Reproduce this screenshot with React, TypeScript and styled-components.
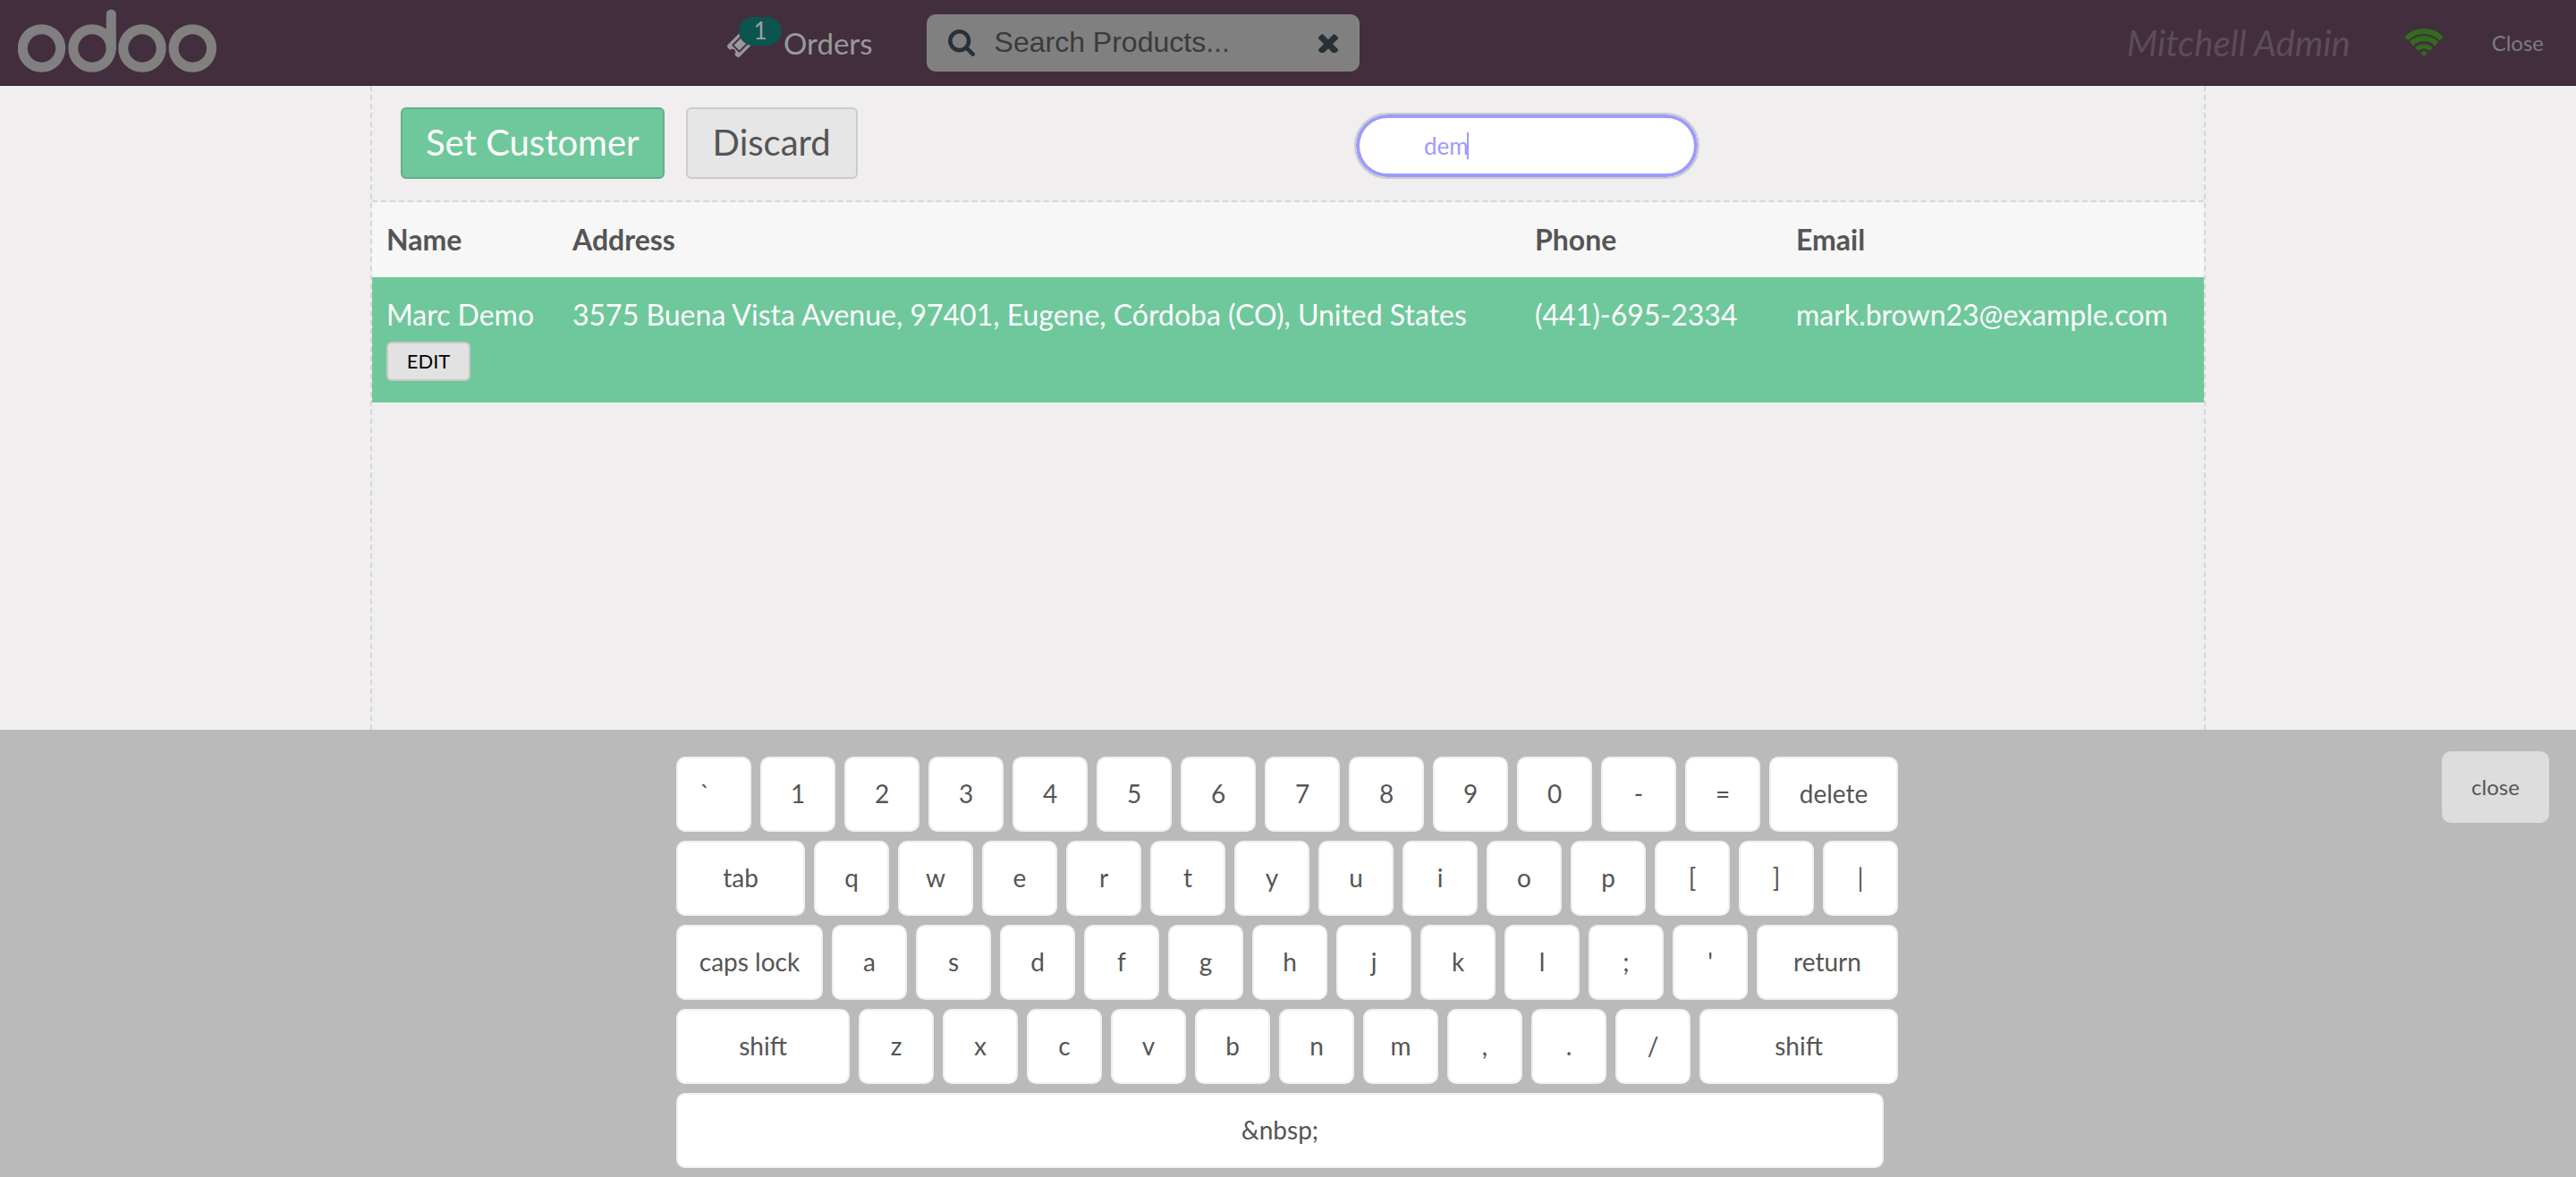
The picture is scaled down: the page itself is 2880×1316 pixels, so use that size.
import React, { useState } from "react";
import styled, { createGlobalStyle } from "styled-components";

const GlobalStyle = createGlobalStyle`
  *, *::before, *::after { box-sizing: border-box; }
  body {
    margin: 0;
    background: #f0eeee;
    color: #555;
    font-family: Lato, "Open Sans", sans-serif;
  }
  button, input { font-family: inherit; margin: 0; }
`;

const Page = styled.div`
  display: flex;
  flex-direction: column;
  min-height: 100vh;
`;

const TopBar = styled.header`
  display: flex;
  align-items: center;
  height: 96px;
  flex: none;
  background: #432e3e;
  border-bottom: 1px solid #38252f;
`;

const Branding = styled.div`
  flex: 0 0 812px;
  padding-left: 20px;
  svg { display: block; }
`;

const OrdersButton = styled.button`
  position: relative;
  display: flex;
  align-items: center;
  gap: 30px;
  padding: 0;
  border: 0;
  background: none;
  color: #999;
  font-size: 33px;
  line-height: 48px;
`;

const Badge = styled.span`
  position: absolute;
  left: 14px;
  top: -5px;
  width: 48px;
  height: 32px;
  border-radius: 16px;
  background: #0b5450;
  color: #a0a0a0;
  font-size: 26px;
  line-height: 30px;
  text-align: center;
`;

const ProductSearch = styled.label`
  display: flex;
  align-items: center;
  gap: 22px;
  width: 484px;
  height: 64px;
  margin-left: 60px;
  padding: 0 24px;
  border-radius: 10px;
  background: #808080;
  color: #263238;
`;

const ProductInput = styled.input`
  flex: 1;
  min-width: 0;
  padding: 0;
  border: 0;
  outline: 0;
  background: none;
  font-family: "Liberation Sans", Arial, sans-serif;
  font-size: 32px;
  color: #3a3a3a;
  &::placeholder { color: #3a3a3a; opacity: 1; }
`;

const IconButton = styled.button`
  display: flex;
  padding: 0;
  border: 0;
  background: none;
  color: inherit;
`;

const StatusArea = styled.div`
  display: flex;
  align-items: center;
  margin-left: auto;
  padding-right: 36px;
`;

const Cashier = styled.span`
  color: #5d4c59;
  font-size: 40px;
  font-style: italic;
`;

const Wifi = styled.span`
  display: flex;
  margin: 0 54px 0 60px;
  color: #326b1f;
`;

const CloseSession = styled.button`
  padding: 0;
  border: 0;
  background: none;
  color: #7d7d7d;
  font-size: 24px;
`;

const ClientScreen = styled.main`
  flex: 1;
  width: 100%;
  max-width: 2052px;
  margin: 0 auto;
  border: 2px dashed #d6d6d6;
  border-width: 0 2px;
`;

const Toolbar = styled.section`
  display: flex;
  align-items: flex-start;
  height: 130px;
  padding: 24px 32px 0;
  border-bottom: 2px dashed #d6d6d6;
`;

const ActionButton = styled.button<{ $primary?: boolean }>`
  min-width: 192px;
  height: 80px;
  margin-right: 24px;
  padding: 0 26px 2px;
  border: 2px solid ${(p) => (p.$primary ? "#64af8a" : "#cecbcb")};
  border-radius: 6px;
  background: ${(p) => (p.$primary ? "#6ec89b" : "#e6e6e6")};
  color: ${(p) => (p.$primary ? "#fff" : "#555")};
  font-size: 40px;
`;

const CustomerSearch = styled.div`
  position: relative;
  width: 386px;
  margin: 6px 532px 0 auto;
`;

const CustomerInput = styled.input`
  display: block;
  width: 100%;
  height: 74px;
  padding: 0 40px 0 76px;
  border: 2px solid #cecbcb;
  border-radius: 37px;
  outline: 0;
  box-shadow: inset 0 0 0 4px #9b9bff;
  background: #fff;
  color: #9b9bff;
  caret-color: transparent;
  font-size: 26px;
`;

const Caret = styled.span`
  position: absolute;
  left: 126px;
  top: 22px;
  width: 2px;
  height: 30px;
  background: #9b9bff;
`;

const ClientTable = styled.table`
  width: 100%;
  border-collapse: collapse;
  table-layout: fixed;
  font-size: 32px;
  line-height: 40px;
  text-align: left;
`;

const HeadCell = styled.th<{ $width: string }>`
  width: ${(p) => p.$width};
  height: 84px;
  padding: 0 16px;
  background: #f7f7f7;
  font-weight: 700;
`;

const Cell = styled.td`
  height: 140px;
  padding: 22px 16px 0;
  background: #6ec89b;
  color: #fff;
  vertical-align: top;
  white-space: nowrap;
`;

const EditButton = styled.button`
  display: block;
  width: 94px;
  height: 44px;
  margin-top: 10px;
  padding: 0 0 2px;
  border: 2px solid #c8c8c8;
  border-radius: 6px;
  background: #e2e2e2;
  color: #000;
  font-size: 22px;
  text-transform: uppercase;
`;

const Keyboard = styled.section`
  position: relative;
  flex: none;
  display: flex;
  justify-content: center;
  padding: 30px 0 10px;
  background: #bababa;
`;

const KeyRows = styled.div`
  display: flex;
  flex-direction: column;
  gap: 10px;
  width: 1368px;
  padding-right: 2px;
`;

const KeyRow = styled.div`
  display: flex;
  gap: 10px;
`;

const Key = styled.button<{ $width: number; $shifted?: boolean }>`
  flex: none;
  width: ${(p) => p.$width}px;
  height: 84px;
  padding: 0 ${(p) => (p.$shifted ? 20 : 0)}px 2px 0;
  border: 2px solid #f0f0f0;
  border-radius: 10px;
  background: #fff;
  color: #555;
  font-size: 28px;
`;

const CloseKeyboard = styled.button`
  position: absolute;
  top: 24px;
  right: 30px;
  width: 120px;
  height: 80px;
  padding: 0 0 2px;
  border: 0;
  border-radius: 10px;
  background: #ddd;
  color: #555;
  font-size: 24px;
`;

const Logo = () => (
  <svg width="224" height="76" viewBox="0 0 224 76" fill="none" stroke="#808080" strokeWidth="11" role="img" aria-label="odoo">
    <circle cx="26.500" cy="44" r="21.200" />
    <circle cx="83" cy="44" r="21.200" />
    <circle cx="139" cy="44" r="21.200" />
    <circle cx="195.300" cy="44" r="21.200" />
    <path d="M104.300 44V6" strokeLinecap="round" />
  </svg>
);

const TicketIcon = () => (
  <svg width="34" height="34" viewBox="0 0 1792 1792" fill="currentColor" aria-hidden="true">
    <path d="M1024 452l316 316-572 572-316-316zm-211 979l618-618q19-19 19-45t-19-45l-362-362q-18-18-45-18t-45 18l-618 618q-19 19-19 45t19 45l362 362q18 18 45 18t45-18zm889-637l-907 908q-37 37-90.500 37t-90.500-37l-126-126q56-56 56-136t-56-136-136-56-136 56l-125-126q-37-37-37-90.500t37-90.500l907-906q37-37 90.500-37t90.500 37l125 125q-56 56-56 136t56 136 136 56 136-56l126 125q37 37 37 90.500t-37 90.500z" />
  </svg>
);

const SearchIcon = () => (
  <svg width="30" height="30" viewBox="64 128 1664 1664" fill="currentColor" aria-hidden="true">
    <path d="M1216 832q0-185-131.500-316.500t-316.500-131.500-316.500 131.500-131.500 316.500 131.500 316.500 316.500 131.500 316.500-131.500 131.500-316.500zm512 832q0 52-38 90t-90 38q-54 0-90-38l-343-342q-179 124-399 124-143 0-273.500-55.500t-225-150-150-225-55.500-273.500 55.500-273.500 150-225 225-150 273.500-55.500 273.500 55.500 225 150 150 225 55.500 273.500q0 220-124 399l343 343q37 37 37 90z" />
  </svg>
);

const ClearIcon = () => (
  <svg width="22" height="22" viewBox="302 238 1188 1188" fill="currentColor" aria-hidden="true">
    <path d="M1490 1258q0 40-28 68l-136 136q-28 28-68 28t-68-28l-294-294-294 294q-28 28-68 28t-68-28l-136-136q-28-28-28-68t28-68l294-294-294-294q-28-28-28-68t28-68l136-136q28-28 68-28t68 28l294 294 294-294q28-28 68-28t68 28l136 136q28 28 28 68t-28 68l-294 294 294 294q28 28 28 68z" />
  </svg>
);

const WifiIcon = () => (
  <svg width="44" height="32" viewBox="0 0 44 32" fill="none" stroke="currentColor" strokeWidth="6" aria-hidden="true">
    <path d="M2.200 11.200A28 28 0 0 1 41.800 11.200" />
    <path d="M7.900 16.900A20 20 0 0 1 36.100 16.900" />
    <path d="M14 23A11.300 11.300 0 0 1 30 23" strokeWidth="5" />
    <path d="M22 31L18 27A5.700 5.700 0 0 1 26 27Z" fill="currentColor" stroke="none" />
  </svg>
);

const WIDE: Record<string, number> = { delete: 144, tab: 144, "caps lock": 164, return: 158, "&nbsp;": 1350 };

const ROWS: string[][] = [
  ["`", "1", "2", "3", "4", "5", "6", "7", "8", "9", "0", "-", "=", "delete"],
  ["tab", "q", "w", "e", "r", "t", "y", "u", "i", "o", "p", "[", "]", "|"],
  ["caps lock", "a", "s", "d", "f", "g", "h", "j", "k", "l", ";", "'", "return"],
  ["shift", "z", "x", "c", "v", "b", "n", "m", ",", ".", "/", "shift"],
  ["&nbsp;"],
];

const keyWidth = (label: string, index: number) =>
  label === "shift" ? (index === 0 ? 194 : 222) : WIDE[label] ?? 84;

const COLUMNS: [string, string][] = [
  ["Name", "208px"],
  ["Address", "auto"],
  ["Phone", "292px"],
  ["Email", "472px"],
];

export default function App() {
  const [query, setQuery] = useState("dem");
  return (
    <Page>
      <GlobalStyle />
      <TopBar>
        <Branding><Logo /></Branding>
        <OrdersButton type="button">
          <TicketIcon />
          <Badge>1</Badge>
          Orders
        </OrdersButton>
        <ProductSearch>
          <SearchIcon />
          <ProductInput type="text" placeholder="Search Products..." aria-label="Search Products" />
          <IconButton type="button" aria-label="Clear search"><ClearIcon /></IconButton>
        </ProductSearch>
        <StatusArea>
          <Cashier>Mitchell Admin</Cashier>
          <Wifi><WifiIcon /></Wifi>
          <CloseSession type="button">Close</CloseSession>
        </StatusArea>
      </TopBar>
      <ClientScreen>
        <Toolbar>
          <ActionButton type="button" $primary>Set Customer</ActionButton>
          <ActionButton type="button">Discard</ActionButton>
          <CustomerSearch>
            <CustomerInput
              type="text"
              aria-label="Search Customers"
              value={query}
              onChange={(e) => setQuery(e.target.value)}
            />
            <Caret />
          </CustomerSearch>
        </Toolbar>
        <ClientTable>
          <thead>
            <tr>
              {COLUMNS.map(([name, width]) => (
                <HeadCell key={name} $width={width}>{name}</HeadCell>
              ))}
            </tr>
          </thead>
          <tbody>
            <tr>
              <Cell>
                Marc Demo
                <EditButton type="button">Edit</EditButton>
              </Cell>
              <Cell>3575 Buena Vista Avenue, 97401, Eugene, Córdoba (CO), United States</Cell>
              <Cell>(441)-695-2334</Cell>
              <Cell>mark.brown23@example.com</Cell>
            </tr>
          </tbody>
        </ClientTable>
      </ClientScreen>
      <Keyboard>
        <KeyRows>
          {ROWS.map((row, r) => (
            <KeyRow key={r}>
              {row.map((label, i) => (
                <Key key={i} type="button" $width={keyWidth(label, i)} $shifted={label === "`"}>
                  {label}
                </Key>
              ))}
            </KeyRow>
          ))}
        </KeyRows>
        <CloseKeyboard type="button">close</CloseKeyboard>
      </Keyboard>
    </Page>
  );
}
